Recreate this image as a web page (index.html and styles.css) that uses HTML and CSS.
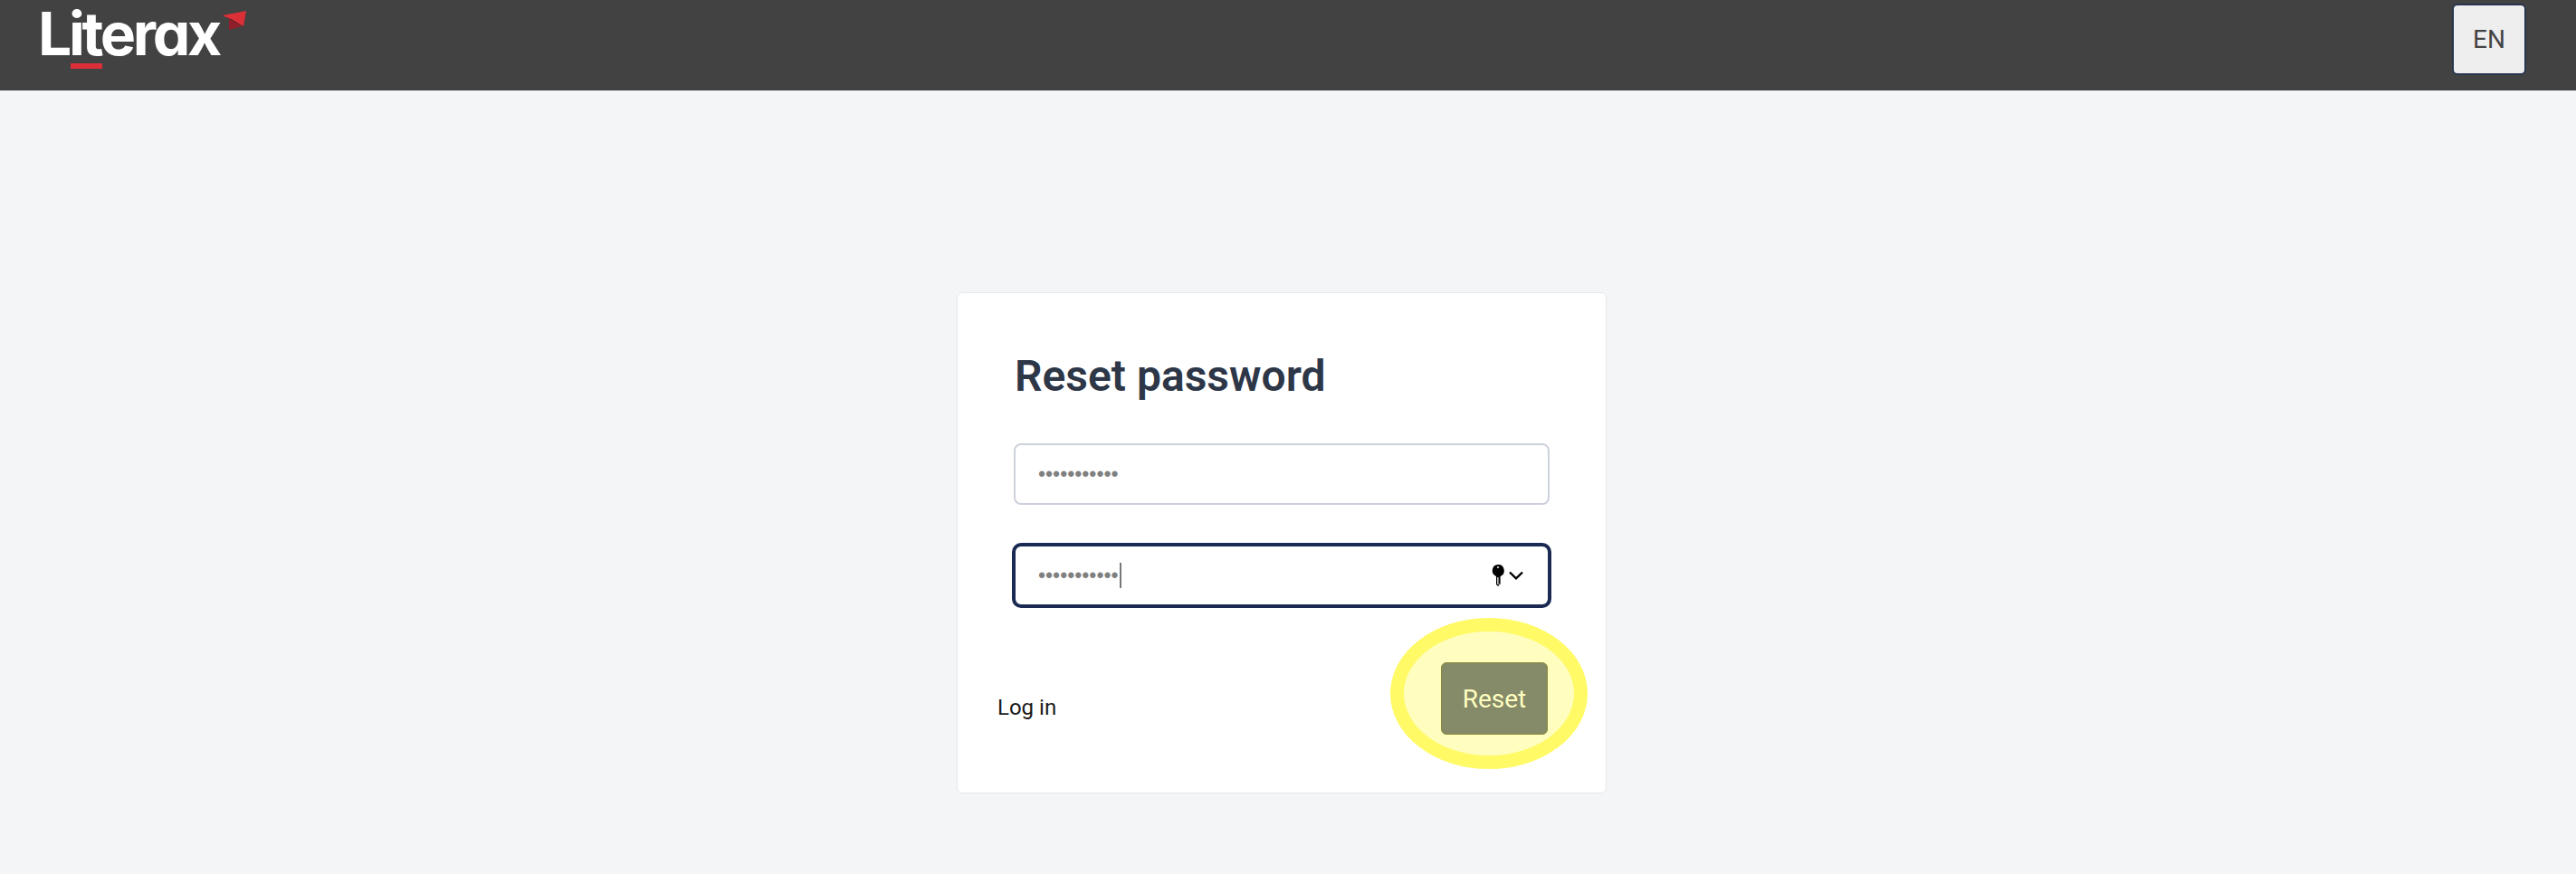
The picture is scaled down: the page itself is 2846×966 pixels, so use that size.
FILE: index.html
```html
<!doctype html>
<html lang="en">
  <head>
    <meta charset="UTF-8" />
    <meta name="viewport" content="width=device-width, initial-scale=1.0" />
    <title>Literax - Reset password</title>
    <link rel="stylesheet" href="styles.css">
  </head>
  <body>
    <header class="topbar">
      <a href="#" class="logo">
        <span class="logo-text">Literax</span>
        <span class="logo-bar"></span>
        <svg class="logo-plane" viewBox="0 0 26 21" width="26" height="21">
          <path d="M0 5 26 0 23 17 8 9z" fill="#dc2f37" />
          <path d="M7 8.500 22 17 7 21z" fill="#8f1f2a" />
          <path d="M4 7 22 17 10 9.500z" fill="#2a1d20" />
        </svg>
      </a>
      <button class="lang-btn">EN</button>
    </header>

    <main class="page">
      <div class="card">
        <h1>Reset password</h1>

        <div class="field">
          <span class="dots">•••••••••••</span>
        </div>

        <div class="field focused">
          <span class="dots">•••••••••••</span>
          <span class="caret"></span>
          <span class="field-icons">
            <svg viewBox="0 0 14 24" width="14" height="24">
              <path d="M7 0a6.700 6.700 0 0 1 2.600 12.900V22l-1.200-1V22.500L7 24l-2-2V12.900A6.700 6.700 0 0 1 7 0z" fill="#000" />
              <circle cx="7" cy="3" r="1" fill="#fff" />
              <rect x="6.300" y="14" width="1.200" height="8" fill="#fff" />
            </svg>
            <svg viewBox="0 0 16 10" width="16" height="10">
              <path d="M1 1.500 8 8.300 15 1.500" fill="none" stroke="#000" stroke-width="2.400" />
            </svg>
          </span>
        </div>

        <div class="actions">
          <a href="#" class="login-link">Log in</a>
          <div class="submit-wrap">
            <button class="submit-btn">Reset</button>
            <div class="highlight"></div>
          </div>
        </div>
      </div>
    </main>
  </body>
</html>
```

FILE: styles.css
```css
* {
  margin: 0;
  padding: 0;
  box-sizing: border-box;
}

body {
  font-family: Roboto, "Liberation Sans", sans-serif;
  background: #f4f5f7;
  min-height: 100vh;
}

.topbar {
  height: 100px;
  background: #424242;
  display: flex;
  align-items: flex-start;
  justify-content: space-between;
  padding: 4px 55px 0 46px;
}

.logo {
  position: relative;
  display: flex;
  align-items: flex-start;
  color: white;
  text-decoration: none;
}

.logo-text {
  font-family: Inter, sans-serif;
  font-feature-settings: "cv11";
  font-size: 66px;
  font-weight: 700;
  line-height: 66px;
  letter-spacing: -3.300px;
  margin-left: -4px;
}

.logo-bar {
  position: absolute;
  left: 32px;
  top: 66px;
  width: 35px;
  height: 6px;
  background: #dc2f37;
}

.logo-plane {
  margin-top: 8px;
  margin-left: 4px;
}

.lang-btn {
  width: 82px;
  height: 79px;
  background: #eeeeee;
  border: 2px solid #29344f;
  border-radius: 6px;
  color: #444;
  font-family: Roboto, sans-serif;
  font-size: 28px;
}

.page {
  display: flex;
  justify-content: center;
  padding: 223px 14px 0 0;
}

.card {
  width: 718px;
  background: white;
  border: 1px solid #e5e7eb;
  border-radius: 6px;
  padding: 64px 62px;
}

h1 {
  font-size: 48px;
  font-weight: 600;
  line-height: 56px;
  color: #2d3748;
  margin-bottom: 46px;
  padding-left: 1px;
}

.field {
  height: 68px;
  display: flex;
  align-items: center;
  background: white;
  border: 2px solid #cdd1dc;
  border-radius: 8px;
  padding: 0 25px;
  margin-bottom: 44px;
}

.field.focused {
  border-color: #1b2a52;
  box-shadow: 0 0 0 2px #1b2a52;
  margin-bottom: 62px;
}

.dots {
  font-family: "Liberation Sans", sans-serif;
  font-size: 23px;
  color: #808080;
}

.caret {
  width: 2px;
  height: 28px;
  background: #777;
  margin-left: 1px;
}

.field-icons {
  margin-left: auto;
  display: flex;
  align-items: center;
  gap: 5px;
  margin-right: 2px;
}

.actions {
  display: flex;
  align-items: center;
  justify-content: space-between;
  margin: 0 2px 0 -18px;
}

.login-link {
  font-size: 24px;
  color: #1a1a1a;
  text-decoration: none;
  margin-top: 20px;
}

.submit-wrap {
  position: relative;
}

.submit-btn {
  display: block;
  width: 118px;
  height: 80px;
  background: #5c648b;
  border: 1px solid #60654a;
  border-radius: 6px;
  color: white;
  font-family: Roboto, sans-serif;
  font-size: 28px;
}

.highlight {
  position: absolute;
  left: -56px;
  right: -44px;
  top: -49px;
  bottom: -38px;
  border: 15px solid rgba(255, 247, 0, 0.6);
  border-radius: 50%;
  background: rgba(255, 252, 0, 0.25);
  background-clip: padding-box;
}
```
